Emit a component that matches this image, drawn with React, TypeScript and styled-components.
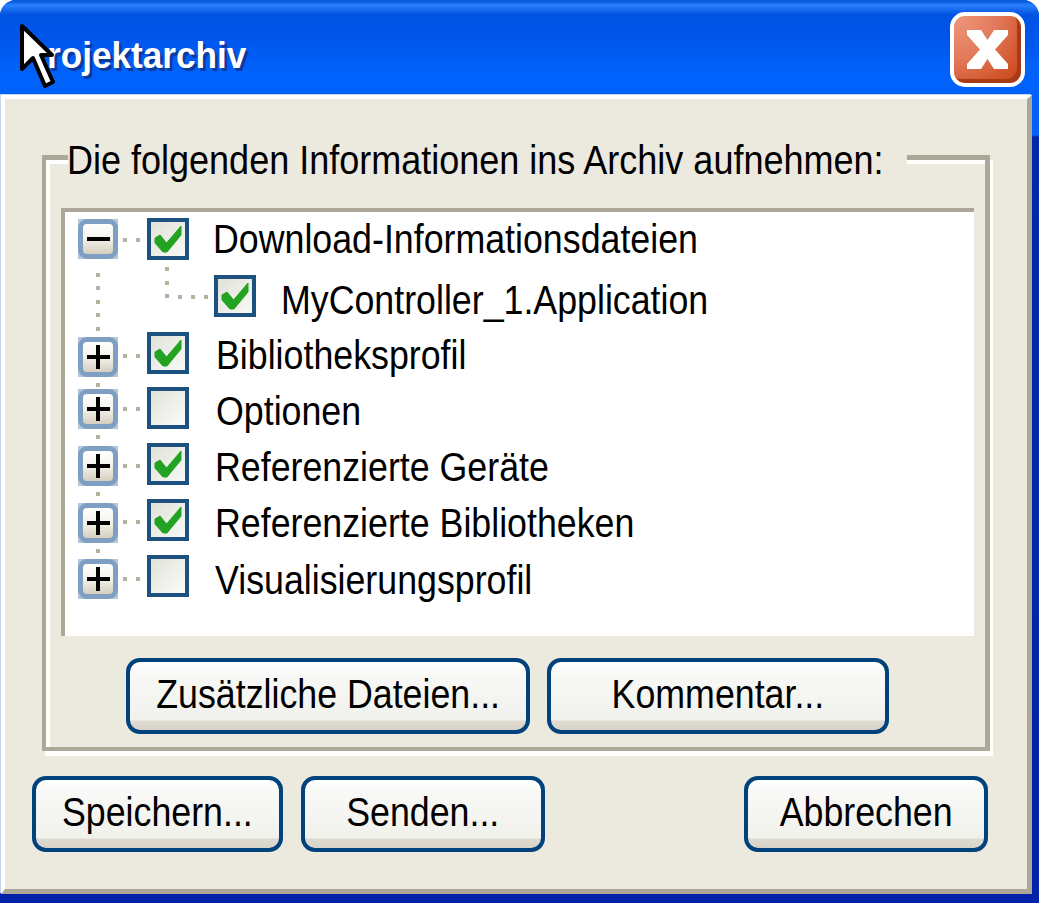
import * as React from 'react';
import styled, { createGlobalStyle } from 'styled-components';

const GlobalStyle = createGlobalStyle`
  html, body {
    margin: 0;
    padding: 0;
    background: #fff;
    font-family: "Liberation Sans", Arial, sans-serif;
  }
`;

const Window = styled.div`
  position: relative;
  width: 1039px;
  height: 903px;
  display: flex;
  flex-direction: column;
  overflow: hidden;
  border-radius: 16px 16px 0 0;
  background: linear-gradient(to bottom, #0060f8 0, #0060f8 135px, #0028a8 137px, #0022a8 100%);
`;

const TitleBar = styled.div`
  flex: 0 0 94px;
  box-sizing: border-box;
  display: flex;
  justify-content: space-between;
  align-items: flex-start;
  padding: 12px 14px 0 47px;
  background: linear-gradient(
    to bottom,
    #0a56d8 0,
    #0a5de2 2px,
    #2b80ff 5px,
    #1a6cf0 9px,
    #0052e2 15px,
    #0056ec 40px,
    #0062fa 70px,
    #0062fa 100%
  );
`;

const Title = styled.div`
  margin-top: 23px;
  font-size: 37px;
  line-height: 42px;
  font-weight: bold;
  color: #fff;
  text-shadow: 3px 3px 0 #0a3a9c;
  transform: scaleX(0.95);
  transform-origin: left center;
`;

const CloseButton = styled.div`
  box-sizing: border-box;
  width: 75px;
  height: 75px;
  display: grid;
  place-items: center;
  border: 4px solid #fff;
  border-radius: 15px;
  background: radial-gradient(circle at 0 0, #ee987c 0, #e27a5c 45%, #d2542a 80%, #cc451c 100%);
  box-shadow: inset -4px -4px 0 #a93a18;
`;

const CloseGlyph = styled.svg`
  display: block;
  width: 41px;
  height: 39px;
  fill: #fff;
`;

const Cursor = styled.svg`
  position: absolute;
  left: 0;
  top: 0;
  width: 70px;
  height: 100px;
`;

const Client = styled.div`
  box-sizing: border-box;
  width: 1031px;
  height: 799px;
  margin: 1px 0 0 1px;
  border-style: solid;
  border-width: 4px 5px 5px 4px;
  border-color: #fff #aca899 #aca899 #fff;
  background: #ece9de;
  box-shadow: -1px -1px 0 #c6d2f6;
  padding: 56px 0 0 0;
`;

const Group = styled.div`
  position: relative;
  box-sizing: border-box;
  width: 948px;
  height: 596px;
  margin-left: 37px;
  border-style: solid;
  border-width: 5px 5px 4px 4px;
  border-color: #aca899;
  box-shadow: inset 4px 4px 0 #fff, 3px 5px 0 #fff;
  padding: 48px 0 0 15px;
`;

const Legend = styled.div`
  position: absolute;
  left: 22px;
  top: -20px;
  width: 839px;
  height: 40px;
  background: #ece9de;
`;

const Label = styled.span`
  display: inline-block;
  font-size: 41px;
  line-height: 41px;
  color: #000;
  white-space: nowrap;
  transform: scaleX(0.872);
  transform-origin: left center;
`;

const LegendLabel = styled(Label)`
  font-size: 40px;
  line-height: 40px;
  transform: scaleX(0.9);
  margin-left: -1px;
`;

const Tree = styled.div`
  box-sizing: border-box;
  width: 913px;
  height: 428px;
  border-style: solid;
  border-width: 4px 0 0 4px;
  border-color: #aca899;
  background: #fff;
  padding: 6px 0 0 13px;
`;

const Row = styled.div<{ $pitch: number }>`
  display: flex;
  align-items: flex-start;
  height: ${p => p.$pitch}px;
`;

const Expander = styled.div<{ $top: number }>`
  position: relative;
  flex: 0 0 40px;
  height: 40px;
  margin-top: ${p => p.$top}px;
  background: #b4c6da;
`;

const ExpanderFace = styled.div<{ $open: boolean }>`
  box-sizing: border-box;
  height: 100%;
  display: grid;
  place-items: center;
  border: 5px solid #7f9fc2;
  border-radius: 9px;
  background: linear-gradient(to bottom, #fff 0, #f6f4ee 45%, #d6cfc0 100%);

  &::before,
  &::after {
    content: '';
    grid-area: 1 / 1;
    background: #000;
  }
  &::before {
    width: 23px;
    height: 4px;
  }
  &::after {
    width: 4px;
    height: 24px;
    display: ${p => (p.$open ? 'none' : 'block')};
  }
`;

const Stem = styled.span<{ $gap: number; $len: number }>`
  position: absolute;
  left: 18px;
  top: calc(100% + ${p => p.$gap}px);
  width: 4px;
  height: ${p => p.$len}px;
  background: repeating-linear-gradient(to bottom, #b5b2a0 0, #b5b2a0 4px, transparent 4px, transparent 13.5px);
`;

const Connector = styled.span<{ $top: number }>`
  flex: 0 0 29px;
  height: 4px;
  margin-top: ${p => p.$top}px;
  background:
    linear-gradient(#b5b2a0, #b5b2a0) 5px 0 / 4px 4px no-repeat,
    linear-gradient(#b5b2a0, #b5b2a0) 18px 0 / 4px 4px no-repeat;
`;

const Elbow = styled.svg`
  flex: 0 0 47px;
  height: 41px;
  margin-left: 89px;
  overflow: visible;
  fill: #b5b2a0;
`;

const CheckBox = styled.div<{ $checked: boolean }>`
  box-sizing: border-box;
  flex: 0 0 42px;
  height: 42px;
  border: 4px solid #1c5180;
  outline: 1px solid rgba(28, 81, 128, 0.25);
  outline-offset: -1px;
  background: ${p =>
    p.$checked
      ? 'linear-gradient(135deg, #e2e2da 0, #f8f8f6 100%)'
      : 'linear-gradient(135deg, #e2e2da 0, #fbfbf9 100%)'};
`;

const CheckMark = styled.svg`
  display: block;
  width: 34px;
  height: 34px;
  fill: #22a422;
  stroke: #22a422;
  stroke-width: 1;
  stroke-linejoin: round;
`;

const RowText = styled(Label)<{ $gap: number; $top: number }>`
  margin-left: ${p => p.$gap}px;
  margin-top: ${p => p.$top}px;
`;

const InnerButtons = styled.div`
  display: flex;
  gap: 17px;
  margin: 22px 0 0 65px;
`;

const Footer = styled.div`
  display: flex;
  gap: 18px;
  margin-top: 25px;
  padding: 0 39px 0 27px;
`;

const Button = styled.div<{ $w: number; $push?: boolean }>`
  box-sizing: border-box;
  width: ${p => p.$w}px;
  height: 76px;
  margin-left: ${p => (p.$push ? 'auto' : '0')};
  padding-bottom: 4px;
  display: flex;
  align-items: center;
  justify-content: center;
  border: 4px solid #00427c;
  border-radius: 14px;
  background: linear-gradient(
    to bottom,
    #fff 0,
    #f8f8f6 20%,
    #f1f1ec 85%,
    #dfdbd2 87%,
    #d8d3c8 100%
  );
`;

const ButtonLabel = styled(Label)`
  transform-origin: center center;
`;

type Node = {
  label: string;
  checked: boolean;
  pitch: number;
  expTop: number;
  conTop: number;
  stem?: [number, number];
  gap: number;
  textTop: number;
};

const rows: Node[] = [
  { label: 'Bibliotheksprofil', checked: true, pitch: 55, expTop: 5, conTop: 22, stem: [6, 4], gap: 27, textTop: 3 },
  { label: 'Optionen', checked: false, pitch: 56, expTop: 2, conTop: 20, stem: [6, 4], gap: 27, textTop: 4 },
  { label: 'Referenzierte Geräte', checked: true, pitch: 56, expTop: 3, conTop: 21, stem: [6, 4], gap: 26, textTop: 4 },
  { label: 'Referenzierte Bibliotheken', checked: true, pitch: 56, expTop: 4, conTop: 21, stem: [6, 4], gap: 26, textTop: 4 },
  { label: 'Visualisierungsprofil', checked: false, pitch: 42, expTop: 4, conTop: 22, gap: 26, textTop: 5 },
];

function Box({ checked }: { checked: boolean }) {
  return (
    <CheckBox $checked={checked}>
      {checked && (
        <CheckMark viewBox="4 4 34 34">
          <polygon points="8,20 13,17 19.5,25 34,8 34,17 20,34 16,34 8,25" />
        </CheckMark>
      )}
    </CheckBox>
  );
}

export default function App() {
  return (
    <Window>
      <GlobalStyle />
      <TitleBar>
        <Title>rojektarchiv</Title>
        <CloseButton>
          <CloseGlyph viewBox="0 0 41 39">
            <polygon points="0,0 14,0 20.5,10 27,0 41,0 41,5 28,19.5 41,34 41,39 27,39 20.5,29 14,39 0,39 0,34 13,19.5 0,5" />
          </CloseGlyph>
        </CloseButton>
      </TitleBar>
      <Client>
        <Group>
          <Legend>
            <LegendLabel>Die folgenden Informationen ins Archiv aufnehmen:</LegendLabel>
          </Legend>
          <Tree>
            <Row $pitch={57}>
              <Expander $top={1}>
                <ExpanderFace $open />
                <Stem $gap={14} $len={58} />
              </Expander>
              <Connector $top={20} />
              <Box checked />
              <RowText $gap={24} $top={1}>Download-Informationsdateien</RowText>
            </Row>
            <Row $pitch={57}>
              <Elbow viewBox="0 0 47 41">
                <rect x="-2" y="-8" width="4" height="4" />
                <rect x="-2" y="6" width="4" height="4" />
                <rect x="-2" y="19" width="4" height="4" />
                <rect x="11" y="20" width="4" height="4" />
                <rect x="24" y="20" width="4" height="4" />
                <rect x="37" y="20" width="4" height="4" />
              </Elbow>
              <Box checked />
              <RowText $gap={25} $top={5}>MyController_1.Application</RowText>
            </Row>
            {rows.map(r => (
              <Row key={r.label} $pitch={r.pitch}>
                <Expander $top={r.expTop}>
                  <ExpanderFace $open={false} />
                  {r.stem && <Stem $gap={r.stem[0]} $len={r.stem[1]} />}
                </Expander>
                <Connector $top={r.conTop} />
                <Box checked={r.checked} />
                <RowText $gap={r.gap} $top={r.textTop}>{r.label}</RowText>
              </Row>
            ))}
          </Tree>
          <InnerButtons>
            <Button $w={404}><ButtonLabel>Zusätzliche Dateien...</ButtonLabel></Button>
            <Button $w={342}><ButtonLabel>Kommentar...</ButtonLabel></Button>
          </InnerButtons>
        </Group>
        <Footer>
          <Button $w={251}><ButtonLabel>Speichern...</ButtonLabel></Button>
          <Button $w={244}><ButtonLabel>Senden...</ButtonLabel></Button>
          <Button $w={244} $push><ButtonLabel>Abbrechen</ButtonLabel></Button>
        </Footer>
      </Client>
      <Cursor viewBox="0 0 70 100">
        <polygon
          points="22,26 22,69 33,58 45,86 53,82 41,55 52,55"
          fill="#fff"
          stroke="#000"
          strokeWidth="4"
          strokeLinejoin="round"
        />
      </Cursor>
    </Window>
  );
}
